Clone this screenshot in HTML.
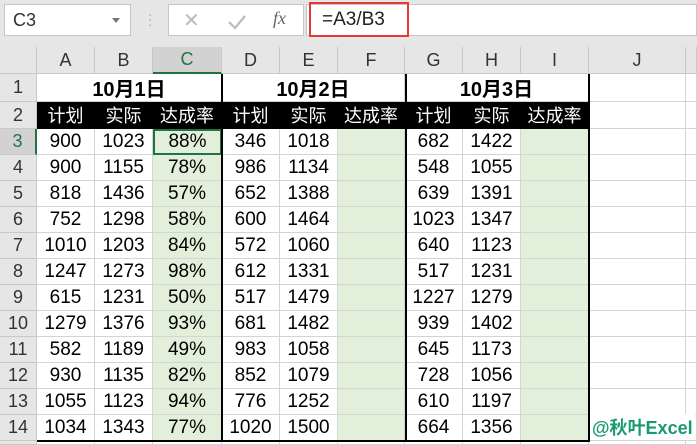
<!DOCTYPE html><html><head><meta charset="utf-8"><style>
body{margin:0;width:697px;height:445px;overflow:hidden;background:#fff;font-family:"Liberation Sans","Noto Sans CJK SC",sans-serif;position:relative}
.top{position:absolute;left:0;top:0;width:697px;height:47px;background:#e6e6e6}
.box{position:absolute;background:#fff;border:1px solid #c6c6c6;box-sizing:border-box}
.grid{position:absolute;left:0;top:47px;display:grid;grid-template-columns:37px 58px 58px 69px 58px 58px 67px 58px 58px 68px 97px 11px;grid-template-rows:27px 28px 27px repeat(12,26px) 4px}
.grid>div{box-sizing:border-box;border-right:1px solid #d4d4d4;border-bottom:1px solid #d4d4d4;display:flex;align-items:center;justify-content:center;font-size:19px;white-space:nowrap;overflow:hidden}
.grid>div.h{background:#e6e6e6;color:#333;border-color:#c8c8c8;font-size:18px}
.grid>div.b{font-weight:bold;font-size:20px}
.grid>div.k{background:#000;color:#fff;border-color:#000;font-size:18px}
.grid>div.g{background:#e2efda}
.v{position:absolute;background:#000}
</style></head><body>
<div class="top"></div>
<div class="box" style="left:4px;top:4px;width:127px;height:32px;font-size:18px;color:#333;padding:5px 0 0 8px">C3<span style="position:absolute;right:10px;top:13px;border:4px solid transparent;border-top:5px solid #777"></span></div>
<div style="position:absolute;left:148px;top:12px;color:#aaa;font-size:14px;line-height:5px">·<br>·<br>·</div>
<div class="box" style="left:168px;top:4px;width:136px;height:32px;color:#bbb;font-size:20px">
<span style="position:absolute;left:14px;top:3px">✕</span>
<svg style="position:absolute;left:58px;top:9px" width="20" height="16"><path d="M2 8 L8 14 L18 2" stroke="#bbb" stroke-width="2.2" fill="none"/></svg>
<span style="position:absolute;left:104px;top:3px;color:#666;font-style:italic;font-family:'Liberation Serif';font-size:18px">fx</span></div>
<div class="box" style="left:306px;top:4px;width:391px;height:32px"></div>
<div style="position:absolute;left:309px;top:2px;width:100px;height:35px;border:2px solid #e53935;box-sizing:border-box;font-size:19px;color:#222;padding:5px 0 0 11px">=A3/B3</div>
<div class="grid">
<div class="h"></div><div class="h">A</div><div class="h">B</div><div class="h" style="background:#d2d2d2;color:#217346;border-bottom:2px solid #217346">C</div><div class="h">D</div><div class="h">E</div><div class="h">F</div><div class="h">G</div><div class="h">H</div><div class="h">I</div><div class="h">J</div><div class="h"></div>
<div class="h">1</div><div class="b" style="grid-column:span 3">10月1日</div><div class="b" style="grid-column:span 3">10月2日</div><div class="b" style="grid-column:span 3">10月3日</div><div></div><div></div>
<div class="h">2</div><div class="k">计划</div><div class="k">实际</div><div class="k">达成率</div><div class="k">计划</div><div class="k">实际</div><div class="k">达成率</div><div class="k">计划</div><div class="k">实际</div><div class="k">达成率</div><div></div><div></div>
<div class="h" style="color:#217346;background:#d2d2d2;border-right:2px solid #217346">3</div><div>900</div><div>1023</div><div class="g" style="border:2px solid #217346">88%</div><div>346</div><div>1018</div><div class="g"></div><div>682</div><div>1422</div><div class="g"></div><div></div><div></div>
<div class="h">4</div><div>900</div><div>1155</div><div class="g">78%</div><div>986</div><div>1134</div><div class="g"></div><div>548</div><div>1055</div><div class="g"></div><div></div><div></div>
<div class="h">5</div><div>818</div><div>1436</div><div class="g">57%</div><div>652</div><div>1388</div><div class="g"></div><div>639</div><div>1391</div><div class="g"></div><div></div><div></div>
<div class="h">6</div><div>752</div><div>1298</div><div class="g">58%</div><div>600</div><div>1464</div><div class="g"></div><div>1023</div><div>1347</div><div class="g"></div><div></div><div></div>
<div class="h">7</div><div>1010</div><div>1203</div><div class="g">84%</div><div>572</div><div>1060</div><div class="g"></div><div>640</div><div>1123</div><div class="g"></div><div></div><div></div>
<div class="h">8</div><div>1247</div><div>1273</div><div class="g">98%</div><div>612</div><div>1331</div><div class="g"></div><div>517</div><div>1231</div><div class="g"></div><div></div><div></div>
<div class="h">9</div><div>615</div><div>1231</div><div class="g">50%</div><div>517</div><div>1479</div><div class="g"></div><div>1227</div><div>1279</div><div class="g"></div><div></div><div></div>
<div class="h">10</div><div>1279</div><div>1376</div><div class="g">93%</div><div>681</div><div>1482</div><div class="g"></div><div>939</div><div>1402</div><div class="g"></div><div></div><div></div>
<div class="h">11</div><div>582</div><div>1189</div><div class="g">49%</div><div>983</div><div>1058</div><div class="g"></div><div>645</div><div>1173</div><div class="g"></div><div></div><div></div>
<div class="h">12</div><div>930</div><div>1135</div><div class="g">82%</div><div>852</div><div>1079</div><div class="g"></div><div>728</div><div>1056</div><div class="g"></div><div></div><div></div>
<div class="h">13</div><div>1055</div><div>1123</div><div class="g">94%</div><div>776</div><div>1252</div><div class="g"></div><div>610</div><div>1197</div><div class="g"></div><div></div><div></div>
<div class="h">14</div><div>1034</div><div>1343</div><div class="g">77%</div><div>1020</div><div>1500</div><div class="g"></div><div>664</div><div>1356</div><div class="g"></div><div></div><div></div>
<div class="h"></div><div></div><div></div><div></div><div></div><div></div><div></div><div></div><div></div><div></div><div></div><div></div>
</div>
<div class="v" style="left:221px;top:74px;width:2px;height:368px"></div>
<div class="v" style="left:405px;top:74px;width:2px;height:368px"></div>
<div class="v" style="left:588px;top:74px;width:2px;height:368px"></div>
<div class="v" style="left:37px;top:440px;width:553px;height:2px"></div>
<div style="position:absolute;left:590px;top:414px;font-size:18px;font-weight:bold;color:#1a9a72;background:#fff;padding:0 2px">@秋叶Excel</div>
</body></html>
